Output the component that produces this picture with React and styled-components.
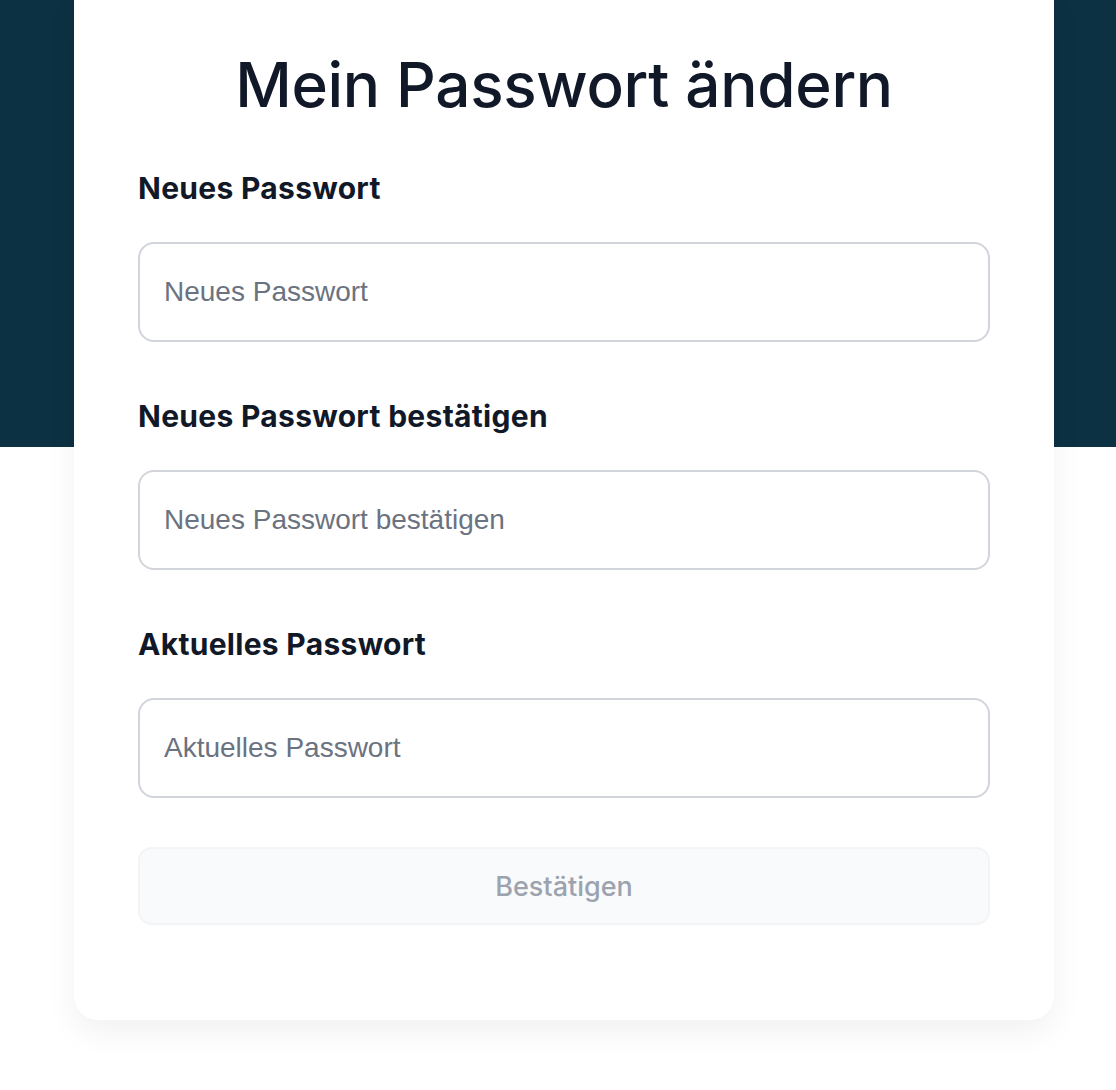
import React, { useState } from "react";
import styled, { createGlobalStyle } from "styled-components";

const GlobalStyle = createGlobalStyle`
  body {
    margin: 0;
    background: #fff;
    font-family: Inter, "Noto Sans", sans-serif;
  }
`;

const Page = styled.div`
  min-height: 100vh;
  padding-left: 12px;
  background: linear-gradient(#0c3142 0, #0c3142 447px, #fff 447px);
  display: flex;
  justify-content: center;
`;

const Card = styled.div`
  width: 980px;
  box-sizing: border-box;
  height: 1020px;
  padding: 48px 64px 0;
  background: #fff;
  border-radius: 0 0 24px 24px;
  box-shadow: 0 12px 32px rgba(0, 0, 0, 0.06);
  display: flex;
  flex-direction: column;
`;

const Title = styled.h1`
  margin: 0 0 48px;
  text-align: center;
  font-size: 62px;
  line-height: 74px;
  font-weight: 500;
  letter-spacing: -0.3px;
  color: #111827;
`;

const Field = styled.div`
  display: flex;
  flex-direction: column;
  margin-bottom: 56px;

  &:last-of-type {
    margin-bottom: 49px;
  }
`;

const Label = styled.label`
  font-size: 30px;
  line-height: 36px;
  font-weight: 700;
  letter-spacing: 0.3px;
  color: #111827;
  margin-bottom: 36px;
`;

const Input = styled.input`
  height: 100px;
  box-sizing: border-box;
  padding: 0 24px;
  border: 2px solid #d1d5db;
  border-radius: 16px;
  font-family: "Liberation Sans", Arial, sans-serif;
  font-size: 28px;
  color: #111827;
  outline: none;

  &::placeholder {
    color: #6b7280;
  }
`;

const Button = styled.button`
  height: 78px;
  border: 2px solid #f3f4f6;
  border-radius: 14px;
  background: #f9fafb;
  color: #9ca3af;
  font-family: Inter, "Noto Sans", sans-serif;
  font-size: 27px;
  font-weight: 500;
  cursor: not-allowed;
`;

const fields = [
  { id: "new", label: "Neues Passwort" },
  { id: "confirm", label: "Neues Passwort bestätigen" },
  { id: "current", label: "Aktuelles Passwort" },
];

const App = () => {
  const [values, setValues] = useState({ new: "", confirm: "", current: "" });

  const ready = values.new && values.confirm && values.current;

  return (
    <>
      <GlobalStyle />
      <Page>
        <Card>
          <Title>Mein Passwort ändern</Title>
          {fields.map((f) => (
            <Field key={f.id}>
              <Label htmlFor={f.id}>{f.label}</Label>
              <Input
                id={f.id}
                type="password"
                placeholder={f.label}
                value={values[f.id]}
                onChange={(e) => setValues({ ...values, [f.id]: e.target.value })}
              />
            </Field>
          ))}
          <Button disabled={!ready}>Bestätigen</Button>
        </Card>
      </Page>
    </>
  );
};

export default App;
